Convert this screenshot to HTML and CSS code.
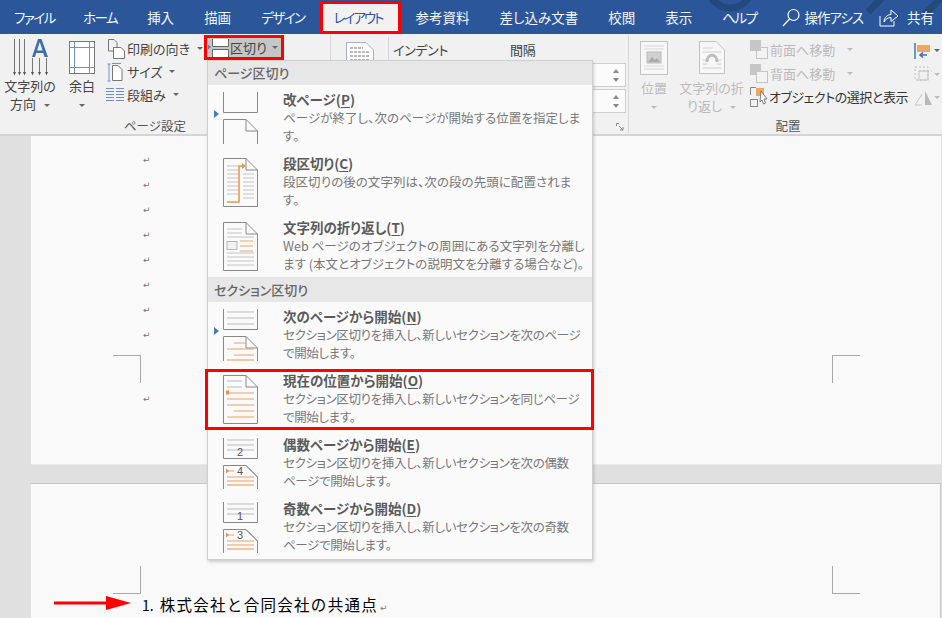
FILE: index.html
```html
<!DOCTYPE html>
<html lang="ja">
<head>
<meta charset="utf-8">
<title>レイアウト</title>
<link rel="stylesheet" href="styles.css">
</head>
<body>
<div class="app">
  <header class="tabs">
    <svg class="tab-deco" width="942" height="34" viewBox="0 0 942 34"><g fill="none" stroke="#24497f" stroke-width="7"><circle cx="730" cy="-14" r="22"/><path d="M868 12 L885 -5M925 14 L944 -5"/></g></svg>
    <div class="tab tab-kana tab-file">ファイル</div>
    <div class="tab tab-kana">ホーム</div>
    <div class="tab">挿入</div>
    <div class="tab">描画</div>
    <div class="tab tab-kana">デザイン</div>
    <div class="tab tab-kana tab-active">レイアウト</div>
    <div class="tab">参考資料</div>
    <div class="tab">差し込み文書</div>
    <div class="tab">校閲</div>
    <div class="tab">表示</div>
    <div class="tab tab-kana">ヘルプ</div>
    <div class="tab-tools">
      <svg width="19" height="19" viewBox="0 0 19 19"><g fill="none" stroke="#fff" stroke-width="1.2"><circle cx="11.5" cy="7" r="5.5"/><path d="M7.5 11 L1 18"/></g></svg>
      <span class="tool-text">操作アシス</span>
      <svg class="share" width="20" height="19" viewBox="0 0 20 19"><g fill="none" stroke="#fff" stroke-width="1"><path d="M1 8 V18 H15 V13"/><path d="M5 14 C5 9 9 6.500 12 6.500 V2 L19 8 L12 13.500 V9.500 C9 9.500 6.500 11 5 14Z"/></g></svg>
      <span class="tool-share">共有</span>
    </div>
  </header>

  <section class="ribbon">
    <div class="group group-page">
      <div class="group-body">
        <div class="big big-dir">
          <svg class="dir-ico" width="36" height="38" viewBox="0 0 36 38"><g stroke="#777" fill="none"><path d="M1.500 1V35M6.500 1V35M11.500 1V35M19.500 20V35M26.500 20V35M33.500 20V35"/></g><g fill="#555"><path d="M0 34H3L1.500 37.500ZM5 34H8L6.500 37.500ZM10 34H13L11.500 37.500ZM18 34H21L19.500 37.500ZM25 34H28L26.500 37.500ZM32 34H35L33.500 37.500Z"/></g><path d="M19 19 L25 1 H28.500 L35 19 H31.500 L30.300 15 H23.200 L22 19Z M24 12.500 H29.500 L26.800 4Z" fill="#3f6fb0"/></svg>
          <span class="big-label">文字列の</span>
          <span class="big-label">方向 <i class="caret"></i></span>
        </div>
        <div class="big big-margin">
          <svg width="26" height="33" viewBox="0 0 26 33"><rect x=".5" y=".5" width="25" height="32" fill="#fff" stroke="#777"/><path d="M.5 6.500H25.500M.5 26.500H25.500M5.500 .5V32.500M20.500 .5V32.500" stroke="#6d93c8" fill="none"/></svg>
          <span class="big-label label-gap">余白</span>
          <i class="caret caret-line"></i>
        </div>
        <div class="small-col">
          <div class="small">
            <svg width="20" height="20" viewBox="0 0 20 20"><g fill="#fff" stroke="#777"><path d="M3.500 .5H9L12 3.500V12H3.500Z" fill="none"/><path d="M8.500 8.500H16L19.500 12V19.500H8.500Z"/></g></svg>
            <span>印刷の向き</span><i class="caret"></i>
          </div>
          <div class="small">
            <svg width="20" height="20" viewBox="0 0 20 20"><path d="M7.500 3.500H13L17 7.500V18.500H7.500Z" fill="#fff" stroke="#777"/><path d="M4 2V19M2.500 2H5.500M2.500 19H5.500M7 1.500H16" stroke="#6d93c8" fill="none"/></svg>
            <span>サイズ</span><i class="caret"></i>
          </div>
          <div class="small">
            <svg width="20" height="20" viewBox="0 0 20 20"><path d="M1 3.500H9M1 6.500H9M1 9.500H9M1 12.500H9M1 15.500H9M11 3.500H19M11 6.500H19M11 9.500H19M11 12.500H19M11 15.500H19" stroke="#6d8fc5" fill="none"/></svg>
            <span>段組み</span><i class="caret"></i>
          </div>
        </div>
        <div class="breaks-col">
          <div class="breaks-btn">
            <svg width="23" height="19" viewBox="0 0 23 19"><path d="M1 6.500 L4 9 L1 11.500Z" fill="#4a7ebb"/><g fill="#fff" stroke="#666"><path d="M5.500 1V8.500H21.500V1"/><path d="M5.500 19V11.500H21.500V19"/></g></svg>
            <span>区切り</span><i class="caret"></i>
          </div>
        </div>
      </div>
      <div class="group-label label-page">ページ設定</div>
    </div>

    <div class="group group-para">
      <div class="group-body">
        <div class="para-icon">
          <svg width="28" height="34" viewBox="0 0 28 34"><path d="M.5 .5H20L27.500 8V33.500H.5Z" fill="#fff" stroke="#a4b4c8"/><path d="M4 6H17M4 10H24M4 14H24M4 18H24M4 22H24M4 26H24" stroke="#b8b8b8" stroke-width="2" stroke-dasharray="3 1"/></svg>
        </div>
        <div class="para-main">
          <div class="para-head"><span>インデント</span><span>間隔</span></div>
          <div class="spin-stack">
            <div class="spin"><i class="up"></i><i class="down"></i></div>
            <div class="spin"><i class="up"></i><i class="down"></i></div>
          </div>
        </div>
      </div>
      <div class="group-label label-para">
        <svg width="8" height="8" viewBox="0 0 8 8"><path d="M.5 3V.5H3M3 3L7 7M7 4V7H4" fill="none" stroke="#888"/></svg>
      </div>
    </div>

    <div class="group group-arrange">
      <div class="group-body">
        <div class="arr-big arr-pos">
          <svg width="28" height="34" viewBox="0 0 28 34"><rect x=".5" y=".5" width="27" height="33" fill="#f7f7f7" stroke="#c4c4c4"/><path d="M4 5H24M4 8H24M4 25H24M4 28H24" stroke="#d8d8d8"/><rect x="7" y="11" width="14" height="11" fill="#d0d0d0" stroke="#bbb"/><path d="M8 21L12 16L15 19L17 17L20 21Z" fill="#aaa"/></svg>
          <span class="arr-label">位置</span>
          <i class="caret caret-line caret-pale"></i>
        </div>
        <div class="arr-big arr-wrap">
          <svg width="26" height="33" viewBox="0 0 26 33"><path d="M.5 .5H17L25.500 9V32.500H.5Z" fill="#f7f7f7" stroke="#c4c4c4"/><path d="M4 7H14M4 11H22M4 27H22M4 23H8M18 23H22M4 19H7M19 19H22" stroke="#d0d0d0"/><path d="M8 21C8 12 18 12 18 21" fill="none" stroke="#bdbdbd" stroke-width="3"/></svg>
          <span class="arr-label">文字列の折</span>
          <span class="arr-label">り返し <i class="caret caret-pale"></i></span>
        </div>
        <div class="arr-col">
          <div class="arr-row arr-dim">
            <svg width="18" height="19" viewBox="0 0 18 19"><rect x="6.500" y="7.500" width="11" height="11" fill="#f3f3f3" stroke="#c4c4c4"/><rect x="0" y="0" width="11" height="11" fill="#c6c6c6"/></svg>
            <span>前面へ移動</span><i class="caret caret-pale caret-far"></i>
          </div>
          <div class="arr-row arr-dim">
            <svg width="18" height="19" viewBox="0 0 18 19"><rect x="0" y="0" width="11" height="11" fill="#c6c6c6"/><rect x="6.500" y="7.500" width="11" height="11" fill="#f3f3f3" stroke="#c4c4c4"/></svg>
            <span>背面へ移動</span><i class="caret caret-pale caret-far"></i>
          </div>
          <div class="arr-row arr-select">
            <svg width="18" height="20" viewBox="0 0 18 20"><path d="M.5 8V.5H6M.5 .5" fill="none" stroke="#888"/><rect x=".5" y="12.500" width="7" height="7" fill="none" stroke="#888"/><rect x="6" y="1" width="8" height="8" fill="#eda765"/><path d="M11 4L17 12H14L15.500 16L13.500 17L12 13L10 15Z" fill="#f4f4f4" stroke="#666" stroke-width=".8"/></svg>
            <span>オブジェクトの選択と表示</span>
          </div>
        </div>
        <div class="mini-col">
          <div class="mini">
            <svg width="22" height="18" viewBox="0 0 22 18"><rect x="1" y="1" width="2" height="16" fill="#6d93c8"/><rect x="4" y="3" width="13" height="7" fill="#eda765"/><path d="M14 13H7M10 10.500L7 13L10 15.500" fill="none" stroke="#3f6fb0" stroke-width="1.600"/></svg>
            <i class="caret"></i>
          </div>
          <div class="mini">
            <svg width="22" height="18" viewBox="0 0 22 18"><path d="M2 2H15V15H2Z M6 6H19" fill="none" stroke="#bcbcbc" stroke-dasharray="2 2"/><rect x="6" y="6" width="9" height="9" fill="none" stroke="#c4c4c4"/></svg>
            <i class="caret caret-pale"></i>
          </div>
          <div class="mini">
            <svg width="22" height="18" viewBox="0 0 22 18"><path d="M12 2L19 16H12Z" fill="#b8b8b8"/><path d="M9 5L2 16H9" fill="none" stroke="#c8c8c8"/></svg>
            <i class="caret caret-pale"></i>
          </div>
        </div>
      </div>
      <div class="group-label label-arrange">配置</div>
    </div>
  </section>

  <main class="doc">
    <div class="page page-one">
      <div class="marks">
        <span>↵</span><span>↵</span><span>↵</span><span>↵</span><span>↵</span><span>↵</span><span>↵</span><span>↵</span>
      </div>
      <div class="mark-last">↵</div>
      <i class="crop crop-a"></i>
      <i class="crop crop-b"></i>
    </div>
    <div class="page page-two">
      <i class="crop crop-c"></i>
      <i class="crop crop-d"></i>
      <p class="doc-heading"><span class="num">1.</span>株式会社と合同会社の共通点<span class="ret">↵</span></p>
      <svg class="red-arrow" width="78" height="14" viewBox="0 0 78 14"><path d="M0 5.500H52V0L77 7L52 14V8.500H0Z" fill="#f00"/></svg>
    </div>
  </main>

  <aside class="menu">
    <div class="menu-head">ページ区切り</div>
    <div class="item">
      <i class="pointer pointer-a"></i>
      <svg class="ico" width="36" height="52" viewBox="0 0 36 52"><g fill="none" stroke="#888"><path d="M1.500 0V20.500H35.500V0"/><path d="M1.500 52V27.500H24L35.500 39V52M24 27.500V39H35.500"/></g></svg>
      <div class="item-text"><div class="item-title">改ページ(<u>P</u>)</div><div class="item-desc">ページが終了し、次のページが開始する位置を指定しま<br>す。</div></div>
    </div>
    <div class="item">
      <svg class="ico" width="36" height="52" viewBox="0 0 36 52"><g fill="none"><path d="M1.500 2.500H24L35.500 14V50.500H1.500Z M24 2.500V14H35.500" stroke="#888"/><path d="M5 10H16M5 14H16M5 18H16M5 22H16M5 26H16M5 30H16M5 34H16M5 38H16M21 18H32M21 22H32M21 26H32M21 30H32M21 34H32M21 38H32M21 42H32" stroke="#c4c4c4"/><path d="M5 46H17V10H21" stroke="#e8944f" stroke-width="1.500"/></g><path d="M20 7L24 10L20 13Z" fill="#e8944f"/></svg>
      <div class="item-text"><div class="item-title">段区切り(<u>C</u>)</div><div class="item-desc">段区切りの後の文字列は、次の段の先頭に配置されま<br>す。</div></div>
    </div>
    <div class="item">
      <svg class="ico" width="36" height="52" viewBox="0 0 36 52"><g fill="none"><path d="M1.500 2.500H24L35.500 14V50.500H1.500Z M24 2.500V14H35.500" stroke="#888"/><path d="M5 9H20M5 13H20M5 17H32M5 37H32M5 41H32M5 45H32M5 33H32" stroke="#c4c4c4"/><rect x="5" y="21.500" width="10" height="8" stroke="#b8b8b8" fill="#f2f2f2"/><path d="M18 21H31M18 26H31M18 31H31" stroke="#e8a86e"/></g></svg>
      <div class="item-text"><div class="item-title">文字列の折り返し(<u>T</u>)</div><div class="item-desc">Web ページのオブジェクトの周囲にある文字列を分離し<br>ます (本文とオブジェクトの説明文を分離する場合など)。</div></div>
    </div>
    <div class="menu-head menu-head-two">セクション区切り</div>
    <div class="item">
      <i class="pointer pointer-b"></i>
      <svg class="ico" width="36" height="52" viewBox="0 0 36 52"><g fill="none"><path d="M1.500 0V20.500H35.500V0" stroke="#888"/><path d="M5 3H32M5 9H32M5 15H32" stroke="#bbb"/><path d="M1.500 52V27.500H24L35.500 39V52M24 27.500V39H35.500" stroke="#888"/><path d="M12 34H24M5 40H32M12 46H32" stroke="#e8a06a"/><path d="M5 51H32" stroke="#f0c8a4" stroke-width="2"/></g></svg>
      <div class="item-text"><div class="item-title">次のページから開始(<u>N</u>)</div><div class="item-desc desc-tight">セクション区切りを挿入し、新しいセクションを次のページ<br>で開始します。</div></div>
    </div>
    <div class="item">
      <svg class="ico" width="36" height="52" viewBox="0 0 36 52"><g fill="none"><path d="M1.500 2.500H24L35.500 14V50.500H1.500Z M24 2.500V14H35.500" stroke="#888"/><path d="M5 8H20M5 14H20" stroke="#bbb"/><path d="M5 20H32M5 26H32M5 32H32M12 38H32M5 44H32" stroke="#e8a06a"/></g><path d="M4 17.500H7V21.500H4Z" fill="#e8944f"/></svg>
      <div class="item-text"><div class="item-title">現在の位置から開始(<u>O</u>)</div><div class="item-desc desc-tight">セクション区切りを挿入し、新しいセクションを同じページ<br>で開始します。</div></div>
    </div>
    <div class="item">
      <svg class="ico" width="36" height="52" viewBox="0 0 36 52"><g fill="none"><path d="M1.500 1V21.500H35.500V1" stroke="#888"/><path d="M5 3H32M5 8H32M5 13H32" stroke="#bbb"/><path d="M1.500 52V28.500H24L35.500 40V52M24 28.500L35.500 40" stroke="#888"/><path d="M5 34H12M5 40H32M5 44H32" stroke="#e8a06a"/><path d="M5 48H32" stroke="#f0c8a4" stroke-width="2"/></g><path d="M4 31.500L7 34L4 36.500Z" fill="#e8944f"/><text x="18" y="19" class="ico-num">2</text><text x="18" y="38" class="ico-num">4</text></svg>
      <div class="item-text"><div class="item-title">偶数ページから開始(<u>E</u>)</div><div class="item-desc desc-tight">セクション区切りを挿入し、新しいセクションを次の偶数<br>ページで開始します。</div></div>
    </div>
    <div class="item">
      <svg class="ico" width="36" height="52" viewBox="0 0 36 52"><g fill="none"><path d="M1.500 1V21.500H35.500V1" stroke="#888"/><path d="M5 3H32M5 8H32M5 13H32" stroke="#bbb"/><path d="M1.500 52V28.500H24L35.500 40V52M24 28.500L35.500 40" stroke="#888"/><path d="M5 34H12M5 40H32M5 44H32" stroke="#e8a06a"/><path d="M5 48H32" stroke="#f0c8a4" stroke-width="2"/></g><path d="M4 31.500L7 34L4 36.500Z" fill="#e8944f"/><text x="18" y="19" class="ico-num">1</text><text x="18" y="38" class="ico-num">3</text></svg>
      <div class="item-text"><div class="item-title">奇数ページから開始(<u>D</u>)</div><div class="item-desc desc-tight">セクション区切りを挿入し、新しいセクションを次の奇数<br>ページで開始します。</div></div>
    </div>
  </aside>
  <div class="callout callout-item"></div>
</div>
</body>
</html>
```
FILE: styles.css
```css
* { box-sizing: border-box; }
html, body { margin: 0; padding: 0; }
body {
  width: 942px;
  height: 618px;
  overflow: hidden;
  font-family: "Noto Sans CJK JP", "Noto Sans", sans-serif;
  font-feature-settings: "palt";
  color: #333;
}
i { display: inline-block; font-style: normal; }
.app { position: relative; width: 942px; height: 618px; overflow: hidden; background: #e0e0e0; display: flex; flex-direction: column; }

/* tabs */
.tabs { position: relative; display: flex; align-items: center; height: 34px; background: #2b579a; color: #f4f6fa; font-size: 13.5px; padding-left: 14px; gap: 30px; flex: none; }
.tab-deco { position: absolute; left: 0; top: 0; }
.tab { position: relative; line-height: 34px; white-space: nowrap; flex: none; }
.tab-kana { letter-spacing: -1.5px; }
.tab-file { width: 38px; margin-right: 1px; }
.tab-active { background: #f1f1f1; color: #2b579a; margin: 1px -15px 0 -15px; padding: 0 15px 0 11px; line-height: 27px; height: 33px; border: 3px solid #f00; letter-spacing: -2px; }
.tab-tools { position: relative; display: flex; align-items: center; margin-left: -4px; flex: none; white-space: nowrap; }
.tool-text { margin-left: 3px; letter-spacing: -1px; }
.share { margin-left: 16px; }
.tool-share { margin-left: 8px; }

/* ribbon */
.ribbon { display: flex; height: 102px; background: #f1f1f1; border-bottom: 2px solid #d4d4d4; flex: none; font-size: 13px; color: #444; }
.group { display: flex; flex-direction: column; height: 100px; border-right: 1px solid #dadada; flex: none; }
.group-body { display: flex; height: 84px; }
.group-label { font-size: 12.5px; line-height: 16px; text-align: center; color: #555; }
.group-page { width: 331px; }
.label-page { width: 310px; }
.group-para { width: 298px; }
.group-arrange { width: 313px; border-right: 0; }
.label-arrange { width: 318px; }
.label-para { text-align: right; padding-right: 4px; }

.big { display: flex; flex-direction: column; align-items: center; line-height: 18px; padding-top: 4px; flex: none; }
.big-label { white-space: nowrap; }
.big-dir { width: 62px; margin-left: -1px; }
.dir-ico { margin-left: 1px; margin-bottom: 1px; }
.big-margin { width: 34px; margin-left: 4px; padding-top: 7px; }
.label-gap { margin-top: 3px; }
.caret { width: 0; height: 0; border-left: 3.500px solid transparent; border-right: 3.500px solid transparent; border-top: 3.500px solid #666; vertical-align: middle; margin-left: 5px; }
.caret-line { margin: 9px 0 0; }
.caret-pale { border-top-color: #bbb; }
.caret-far { margin-left: 10px; }

.small-col { display: flex; flex-direction: column; margin-left: 6px; padding-top: 3px; width: 99px; flex: none; }
.small { display: flex; align-items: center; height: 23px; white-space: nowrap; gap: 2px; }
.breaks-col { padding-top: 1px; flex: none; }
.breaks-btn { display: flex; align-items: center; height: 25px; width: 80px; background: #c6c6c6; border: 3px solid #f00; white-space: nowrap; }
.breaks-btn .caret { margin-left: 5px; }

.para-icon { margin: 8px 0 0 15px; width: 42px; flex: none; }
.para-main { flex: 1; border-left: 1px solid #dadada; margin-top: 3px; padding-left: 3px; }
.para-head { display: flex; gap: 70px; line-height: 18px; padding: 4px 0 0 1px; letter-spacing: -.3px; }
.para-head span:first-child { width: 47px; white-space: nowrap; }
.spin-stack { padding-top: 4px; display: flex; flex-direction: column; gap: 2px; }
.spin { position: relative; height: 24px; width: 234px; background: #fbfbfb; border: 1px solid #d0d0d0; }
.spin .up, .spin .down { position: absolute; right: 6px; width: 0; height: 0; border-left: 3px solid transparent; border-right: 3px solid transparent; }
.spin .up { top: 5px; border-bottom: 4px solid #888; }
.spin .down { bottom: 4px; border-top: 4px solid #888; }

.arr-big { display: flex; flex-direction: column; align-items: center; color: #bbb; line-height: 18px; padding-top: 7px; flex: none; }
.arr-pos { width: 50px; }
.arr-pos svg { margin-bottom: 4px; }
.arr-wrap { width: 65px; }
.arr-wrap svg { margin-bottom: 5px; }
.arr-label { white-space: nowrap; }
.arr-col { display: flex; flex-direction: column; padding-top: 4px; margin-left: 6px; width: 163px; flex: none; }
.arr-row { display: flex; align-items: center; height: 23.500px; white-space: nowrap; gap: 2px; }
.arr-select { color: #333; gap: 1px; letter-spacing: -.45px; }
.arr-dim { color: #bbb; }
.mini-col { display: flex; flex-direction: column; padding-top: 5px; flex: none; }
.mini { display: flex; align-items: center; height: 23.500px; }
.mini .caret { margin-left: -1px; }

/* document */
.doc { flex: 1; padding-left: 31px; padding-right: 1px; display: flex; flex-direction: column; gap: 18px; overflow: hidden; }
.page { position: relative; background: #f9f9f9; flex: none; width: 910px; }
.page-one { height: 329px; border-bottom: 1px solid #e8e8e8; }
.page-two { height: 140px; border-top: 1px solid #c8c8c8; border-right: 1px solid #c8c8c8; }
.marks { display: flex; flex-direction: column; padding: 12px 0 0 112px; font-family: "DejaVu Sans", sans-serif; font-size: 9px; color: #777; }
.marks span { height: 25px; line-height: 25px; }
.mark-last { margin: 39px 0 0 112px; font-family: "DejaVu Sans", sans-serif; font-size: 9px; color: #777; line-height: 25px; }
.crop { position: absolute; width: 28px; height: 28px; border: 0 solid #a8a8a8; }
.crop-a { left: 82px; top: 219px; border-top-width: 1px; border-right-width: 1px; }
.crop-b { left: 801px; top: 219px; border-top-width: 1px; border-left-width: 1px; }
.crop-c { left: 82px; top: 82px; border-bottom-width: 1px; border-right-width: 1px; }
.crop-d { left: 801px; top: 82px; border-bottom-width: 1px; border-left-width: 1px; }
.doc-heading { position: absolute; left: 111px; top: 109px; margin: 0; font-size: 15.500px; line-height: 22px; color: #000; white-space: nowrap; letter-spacing: 1.3px; font-feature-settings: normal; }
.num { letter-spacing: 0; margin-right: 6px; font-size: 14px; }
.ret { font-family: "DejaVu Sans", sans-serif; font-size: 9px; color: #777; margin-left: 2px; }
.red-arrow { position: absolute; left: 23px; top: 112px; }

/* menu */
.menu { position: absolute; left: 207px; top: 60px; width: 386px; height: 500px; background: #fafafa; border: 1px solid #cfcfcf; box-shadow: 1px 2px 3px rgba(0,0,0,.18); }
.menu-head { height: 24px; line-height: 24px; padding-left: 6px; background: #e7e7e7; color: #666; font-size: 13px; font-weight: 500; }
.menu-head-two { height: 25px; line-height: 25px; }
.item { position: relative; display: flex; height: 64px; }
.ico { flex: none; margin: 7px 0 0 14px; }
.item-text { margin: 5px 0 0 25px; width: 306px; white-space: nowrap; }
.item-title { font-size: 13.500px; line-height: 18px; font-weight: 700; color: #5a5a5a; }
.item-title u { text-underline-offset: 2px; }
.item-desc { margin-top: 1px; font-size: 12.500px; line-height: 18px; color: #777; letter-spacing: .05px; }
.desc-tight { letter-spacing: -.35px; }
.pointer { position: absolute; left: 6px; top: 25px; width: 0; height: 0; border-top: 4px solid transparent; border-bottom: 4px solid transparent; border-left: 5px solid #4a7ebb; }
.ico-num { font-family: "Liberation Sans", sans-serif; font-size: 11px; fill: #555; text-anchor: middle; }

.callout { position: absolute; border: 3px solid #f00; pointer-events: none; }
.callout-item { left: 205px; top: 369px; width: 389px; height: 61px; }
```
